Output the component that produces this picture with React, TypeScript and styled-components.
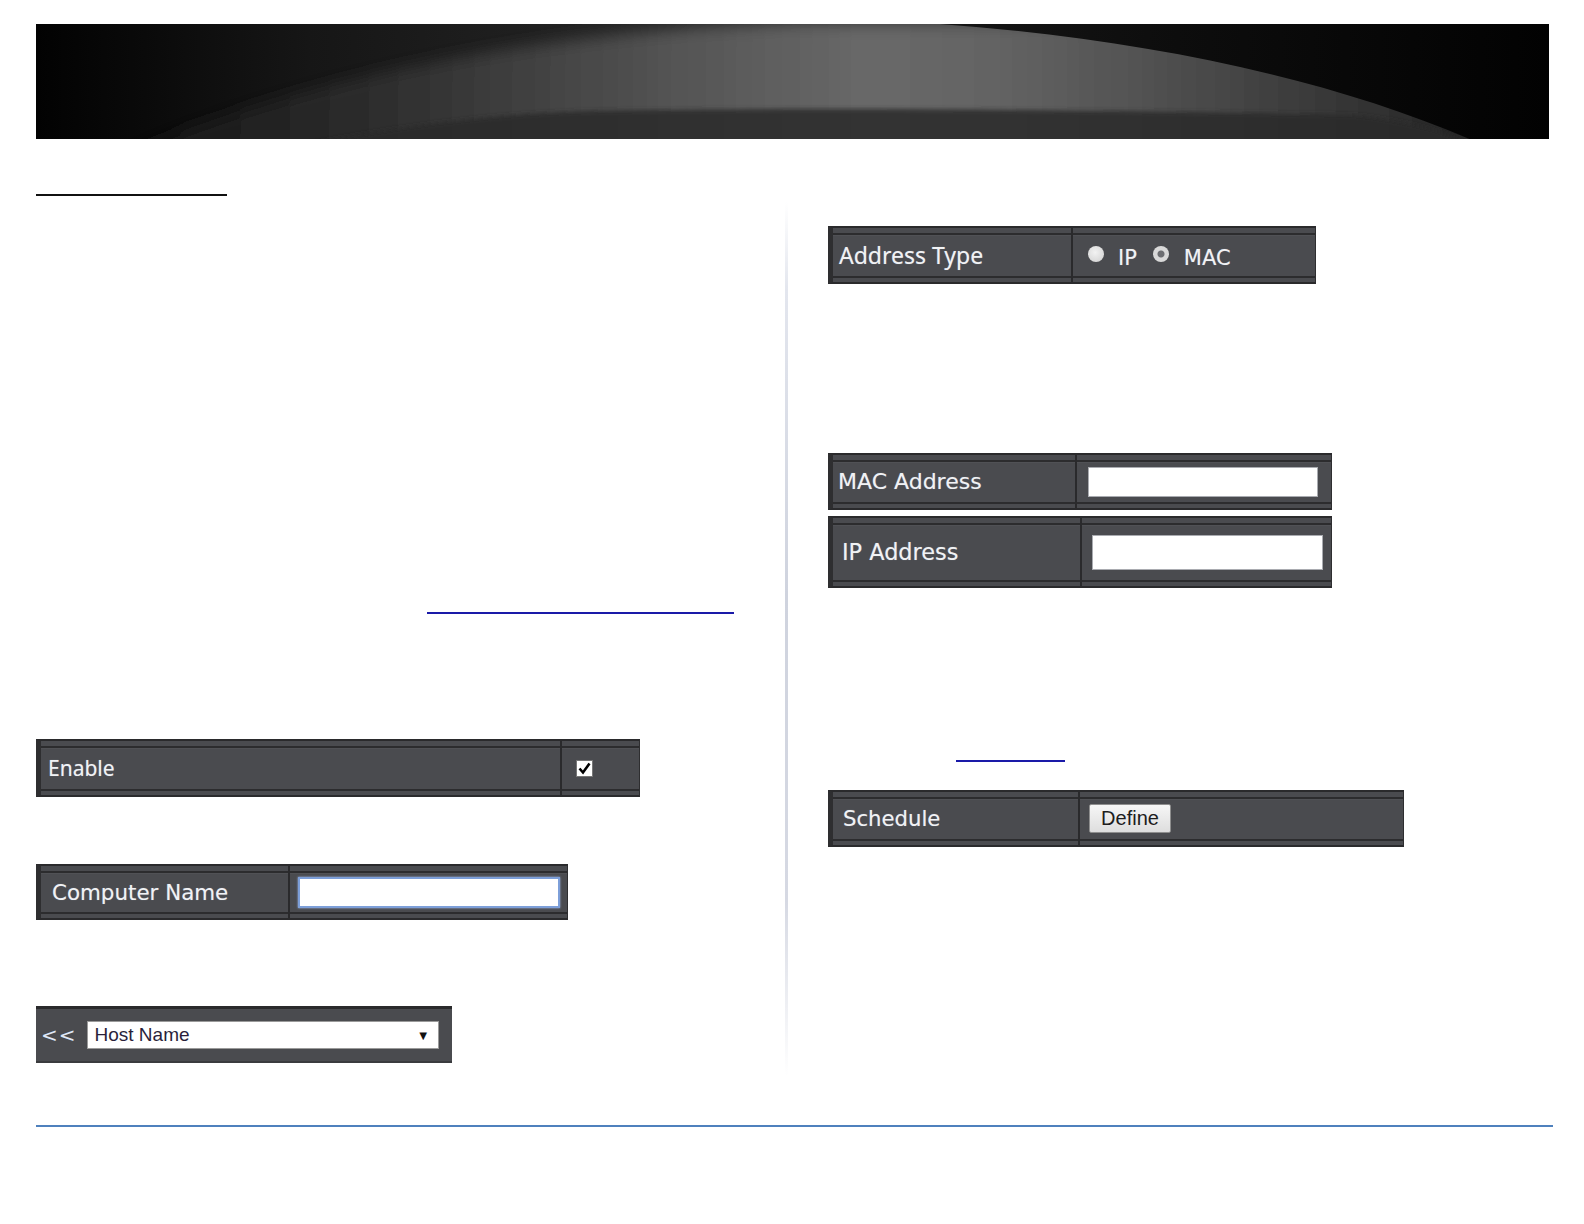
import React from "react";
import styled, { createGlobalStyle } from "styled-components";

const GlobalStyle = createGlobalStyle`
  html, body { margin: 0; padding: 0; background: #ffffff; overflow: hidden; }
  body { font-family: "DejaVu Sans", Verdana, sans-serif; }
  * { box-sizing: border-box; }
`;

const Page = styled.div`
  padding: 24px 0 0 36px;
  background: #fff;
`;

const BannerBox = styled.div`
  width: 1513px;
  height: 115px;
  background: #000;
  overflow: hidden;
  svg { display: block; }
`;

const Columns = styled.div`
  display: grid;
  grid-template-columns: 748px 4px 1fr;
  align-items: start;
`;

const Column = styled.div<{ $pad?: number }>`
  display: flex;
  flex-direction: column;
  align-items: flex-start;
  padding-left: ${(p) => p.$pad ?? 0}px;
`;

const Divider = styled.div`
  margin-top: 63px;
  height: 874px;
  width: 3px;
  justify-self: center;
  background: linear-gradient(
    to bottom,
    rgba(215, 219, 230, 0) 0%,
    #e3e6ee 10%,
    #cfd3de 45%,
    #d6d9e3 80%,
    rgba(215, 219, 230, 0) 100%
  );
`;

const Rule = styled.div<{ $top: number; $left?: number; $w: number; $color: string }>`
  margin-top: ${(p) => p.$top}px;
  margin-left: ${(p) => p.$left ?? 0}px;
  width: ${(p) => p.$w}px;
  height: 2px;
  background: ${(p) => p.$color};
`;

const BottomRule = styled.div`
  margin-top: 49px;
  width: 1517px;
  height: 2px;
  background: #4f81bd;
`;

const Panel = styled.div<{ $top: number; $w: number; $h: number }>`
  margin-top: ${(p) => p.$top}px;
  width: ${(p) => p.$w}px;
  height: ${(p) => p.$h}px;
  display: flex;
  background-color: #4a4b4f;
  background-image: linear-gradient(
    to bottom,
    transparent 5px,
    #2c2c2e 5px,
    #2c2c2e 7px,
    #56575b 7px,
    transparent 8px,
    transparent calc(100% - 6px),
    #2c2c2e calc(100% - 6px),
    #2c2c2e calc(100% - 4px),
    transparent calc(100% - 4px)
  );
  border-top: 2px solid #2a2a2c;
  border-bottom: 2px solid #2a2a2c;
  border-left: 5px solid #2e2e30;
  border-right: 1px solid #2e2e30;
`;

const LabelCell = styled.div<{ $w: number; $size: number; $font?: string; $pad?: number }>`
  width: ${(p) => p.$w}px;
  flex: none;
  display: flex;
  align-items: center;
  padding-left: ${(p) => p.$pad ?? 6}px;
  border-right: 2px solid #2a2a2c;
  color: #f1f2f4;
  font-family: ${(p) => p.$font ?? `"DejaVu Sans", Verdana, sans-serif`};
  font-size: ${(p) => p.$size}px;
  text-shadow: 0 0 1px rgba(190, 205, 235, 0.5);
  white-space: nowrap;
`;

const ValueCell = styled.div<{ $pad: number }>`
  flex: 1;
  display: flex;
  align-items: center;
  padding-left: ${(p) => p.$pad}px;
  color: #f1f2f4;
`;

const TextInput = styled.div<{ $w: number; $h: number; $focus?: boolean }>`
  width: ${(p) => p.$w}px;
  height: ${(p) => p.$h}px;
  background: #fff;
  border: ${(p) => (p.$focus ? "2px solid #7d9fd9" : "1px solid #a9abb0")};
  box-shadow: ${(p) => (p.$focus ? "0 0 2px #9fb8e6" : "none")};
`;

const Radio = styled.span<{ $checked?: boolean }>`
  width: 16px;
  height: 16px;
  border-radius: 50%;
  background: ${(p) =>
    p.$checked
      ? "radial-gradient(circle, #6d6e72 0 3px, #d9d9d9 4px)"
      : "radial-gradient(circle at 45% 40%, #f2f2f2, #cfcfcf)"};
  margin-top: -2px;
  flex: none;
`;

const RadioLabel = styled.span<{ $left: number; $right: number }>`
  margin-left: ${(p) => p.$left}px;
  margin-right: ${(p) => p.$right}px;
  margin-top: 5px;
  font-family: "DejaVu Sans", Verdana, sans-serif;
  font-size: 21px;
  color: #f1f2f4;
  text-shadow: 0 0 1px rgba(190, 205, 235, 0.5);
`;

const Check = styled.span`
  width: 17px;
  height: 17px;
  background: #fff;
  border: 1px solid #777;
  display: flex;
  align-items: center;
  justify-content: center;
  svg { display: block; }
`;

const DefineButton = styled.button`
  width: 82px;
  height: 29px;
  padding: 0;
  font-family: "Liberation Sans", Arial, sans-serif;
  font-size: 20px;
  color: #1d1d1d;
  background: linear-gradient(to bottom, #f6f6f6, #dedede);
  border: 1px solid #8e8e8e;
  border-radius: 2px;
`;

const HostBar = styled.div`
  margin-top: 86px;
  width: 416px;
  height: 57px;
  display: flex;
  align-items: center;
  gap: 10px;
  padding-left: 5px;
  background: #4a4b4f;
  border-top: 3px solid #2a2a2c;
  border-bottom: 2px solid #3a3b3e;
`;

const Back = styled.span`
  color: #dfe7f7;
  font-family: "DejaVu Sans", Verdana, sans-serif;
  font-size: 20px;
  letter-spacing: 1px;
`;

const Select = styled.div`
  width: 352px;
  height: 28px;
  background: #fff;
  border: 1px solid #9a9a9a;
  display: flex;
  align-items: center;
  justify-content: space-between;
  padding: 0 8px 0 7px;
  font-family: "Liberation Sans", Arial, sans-serif;
  font-size: 19px;
  color: #2a1f3a;
`;

const Arrow = styled.span`
  font-size: 13px;
  color: #111;
`;

function Banner() {
  return (
    <BannerBox>
      <svg width="1513" height="115" viewBox="0 0 1497 114" preserveAspectRatio="none">
        <defs>
          <linearGradient id="base" x1="0" y1="0" x2="1497" y2="0" gradientUnits="userSpaceOnUse">
            <stop offset="0" stopColor="#020202" />
            <stop offset="0.18" stopColor="#161616" />
            <stop offset="0.45" stopColor="#282828" />
            <stop offset="0.7" stopColor="#2d2d2d" />
            <stop offset="0.86" stopColor="#151515" />
            <stop offset="1" stopColor="#000" />
          </linearGradient>
          <linearGradient id="blob" x1="60" y1="0" x2="1440" y2="0" gradientUnits="userSpaceOnUse">
            <stop offset="0" stopColor="#111" />
            <stop offset="0.22" stopColor="#303030" />
            <stop offset="0.42" stopColor="#555" />
            <stop offset="0.55" stopColor="#686868" />
            <stop offset="0.64" stopColor="#646464" />
            <stop offset="0.76" stopColor="#505050" />
            <stop offset="0.88" stopColor="#383838" />
            <stop offset="1" stopColor="#222" />
          </linearGradient>
          <linearGradient id="right" x1="760" y1="0" x2="1497" y2="0" gradientUnits="userSpaceOnUse">
            <stop offset="0" stopColor="#1a1a1a" />
            <stop offset="0.5" stopColor="#0d0d0d" />
            <stop offset="1" stopColor="#020202" />
          </linearGradient>
          <filter id="soft" x="-20%" y="-100%" width="140%" height="300%">
            <feGaussianBlur stdDeviation="8" />
          </filter>
          <filter id="edge" x="-20%" y="-100%" width="140%" height="300%">
            <feGaussianBlur stdDeviation="2" />
          </filter>
        </defs>
        <rect width="1497" height="114" fill="url(#base)" />
        <path d="M60 140 C 240 60, 480 6, 760 -2 L 1560 -2 L 1560 140 Z" fill="url(#blob)" filter="url(#soft)" />
        <path
          d="M240 124 C 360 102, 440 89, 560 86 C 800 82, 1100 86, 1300 90 C 1360 96, 1400 108, 1432 124 Z"
          fill="#2a2a2a"
          opacity="0.85"
          filter="url(#edge)"
        />
        <path d="M760 -6 C 1000 -2, 1250 38, 1432 120 L 1500 120 L 1500 -6 Z" fill="url(#right)" />
      </svg>
    </BannerBox>
  );
}

export default function App() {
  return (
    <>
      <GlobalStyle />
      <Page>
        <Banner />
        <Columns>
          <Column>
            <Rule $top={55} $w={191} $color="#111" />
            <Rule $top={416} $left={391} $w={307} $color="#1a1aa8" />

            <Panel $top={125} $w={604} $h={58}>
              <LabelCell $w={521} $size={21} $pad={7} $font={`"Noto Sans", "DejaVu Sans", sans-serif`}>
                Enable
              </LabelCell>
              <ValueCell $pad={14}>
                <Check>
                  <svg width="13" height="13" viewBox="0 0 13 13">
                    <path d="M1.5 6.5 L5 10.5 L11.5 1.5" fill="none" stroke="#000" strokeWidth="2.6" />
                  </svg>
                </Check>
              </ValueCell>
            </Panel>

            <Panel $top={67} $w={532} $h={56}>
              <LabelCell $w={249} $size={21.4} $pad={11}>Computer Name</LabelCell>
              <ValueCell $pad={8}>
                <TextInput $w={262} $h={31} $focus />
              </ValueCell>
            </Panel>

            <HostBar>
              <Back>&lt;&lt;</Back>
              <Select>
                <span>Host Name</span>
                <Arrow>▼</Arrow>
              </Select>
            </HostBar>
          </Column>

          <Divider />

          <Column $pad={40}>
            <Panel $top={87} $w={488} $h={58}>
              <LabelCell $w={240} $size={23} $pad={6} $font={`"Noto Sans", "DejaVu Sans", sans-serif`}>
                Address Type
              </LabelCell>
              <ValueCell $pad={15}>
                <Radio />
                <RadioLabel $left={14} $right={16}>IP</RadioLabel>
                <Radio $checked />
                <RadioLabel $left={15} $right={0}>MAC</RadioLabel>
              </ValueCell>
            </Panel>

            <Panel $top={169} $w={504} $h={57}>
              <LabelCell $w={244} $size={22} $pad={5}>MAC Address</LabelCell>
              <ValueCell $pad={11}>
                <TextInput $w={230} $h={30} />
              </ValueCell>
            </Panel>

            <Panel $top={6} $w={504} $h={72}>
              <LabelCell $w={249} $size={22.4} $pad={9}>IP Address</LabelCell>
              <ValueCell $pad={10}>
                <TextInput $w={231} $h={35} />
              </ValueCell>
            </Panel>

            <Rule $top={172} $left={128} $w={109} $color="#1a1aa8" />

            <Panel $top={28} $w={576} $h={57}>
              <LabelCell $w={247} $size={21.2} $pad={10}>Schedule</LabelCell>
              <ValueCell $pad={9}>
                <DefineButton>Define</DefineButton>
              </ValueCell>
            </Panel>
          </Column>
        </Columns>
        <BottomRule />
      </Page>
    </>
  );
}
